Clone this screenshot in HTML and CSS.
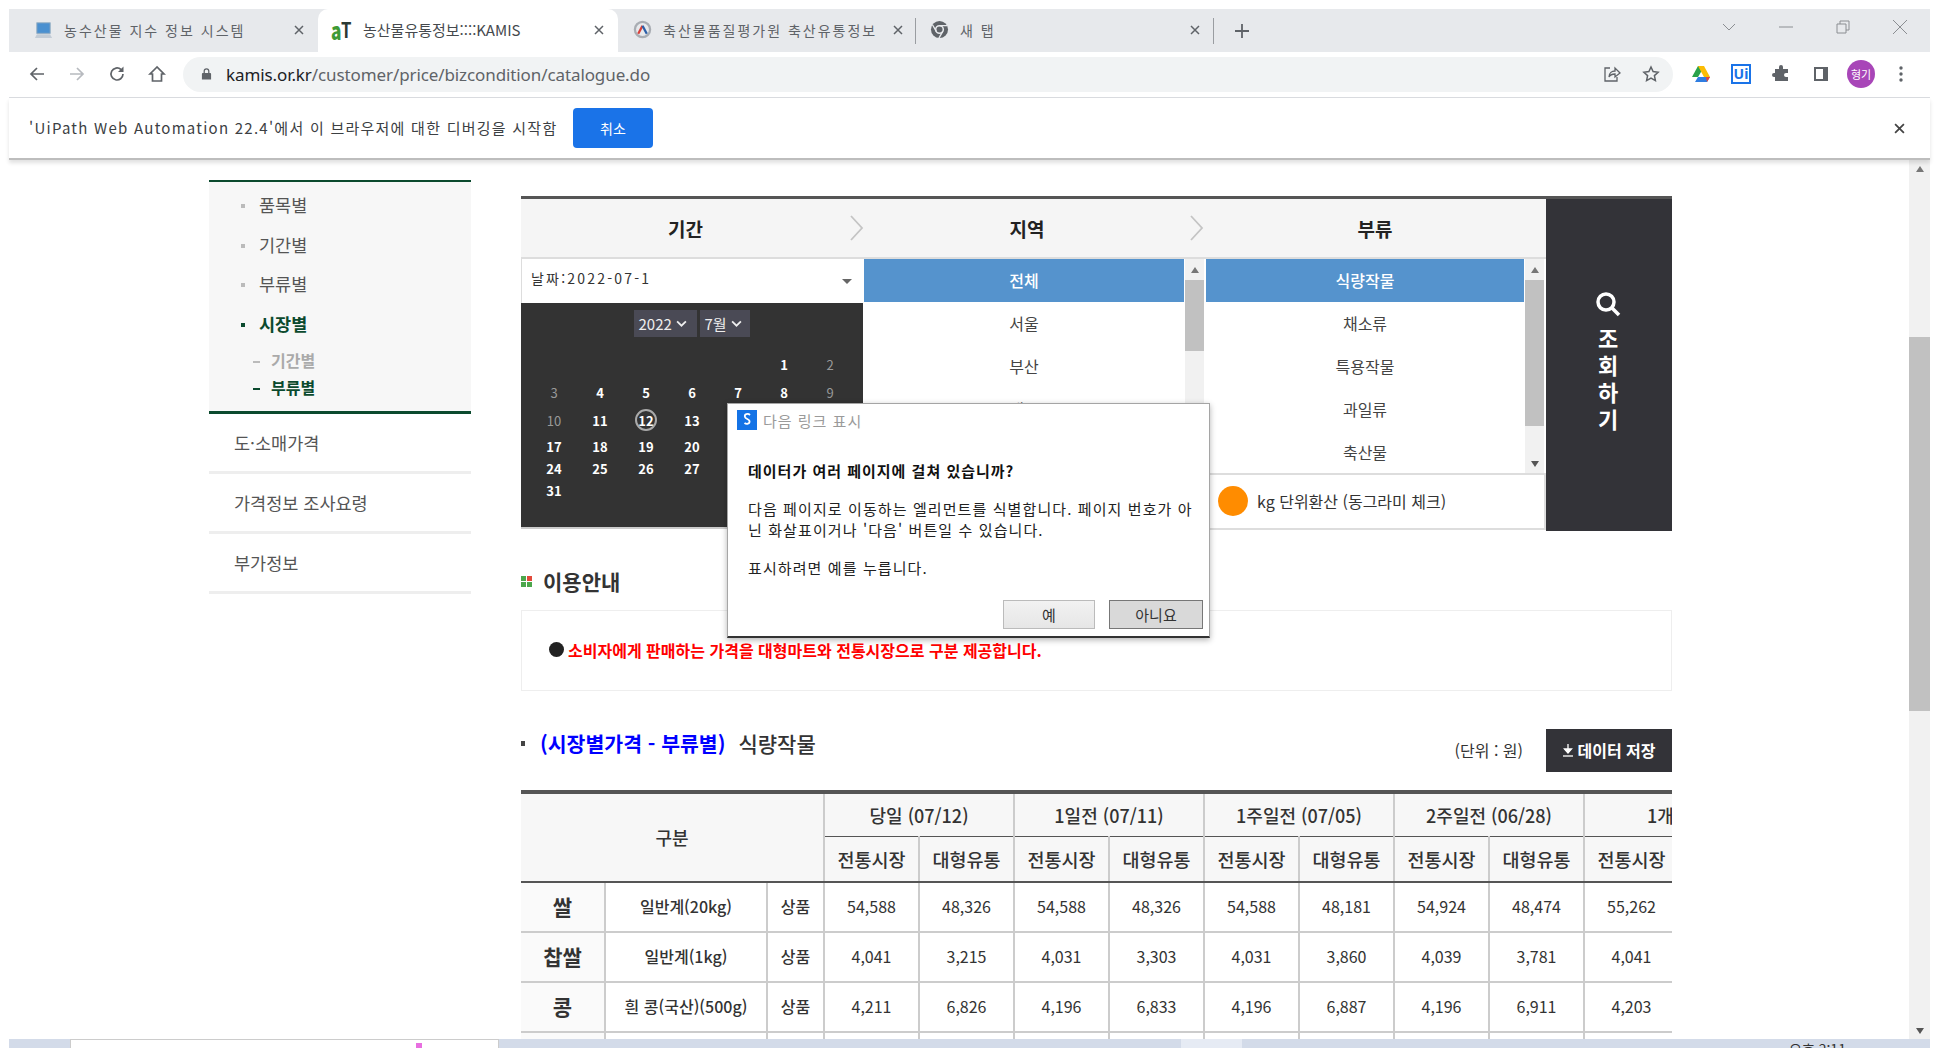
FILE: index.html
```html
<!DOCTYPE html>
<html lang="ko"><head>
<title>농산물유통정보::::KAMIS</title>
<meta charset="UTF-8">
<link rel="stylesheet" href="styles.css">
</head><body>
<div class="window">

<!-- browser chrome -->
<div class="tabstrip">
  <div class="tab tab1">
    <svg class="fav" viewBox="0 0 20 20"><rect x="3" y="3" width="14" height="11" fill="#4a90d0" stroke="#8aa7c0"/><path d="M1 19l2-4h14l2 4z" fill="#c3ccd6"/></svg>
    <span class="tab-title wide">농수산물 지수 정보 시스템</span>
    <svg class="tab-x" viewBox="0 0 10 10"><path d="M1 1l8 8M9 1l-8 8"/></svg>
  </div>
  <div class="tab tab-on">
    <span class="fav fav-at"><b>a</b><i>T</i></span>
    <span class="tab-title">농산물유통정보::::KAMIS</span>
    <svg class="tab-x" viewBox="0 0 10 10"><path d="M1 1l8 8M9 1l-8 8"/></svg>
  </div>
  <div class="tab tab3 tab-sep">
    <svg class="fav" viewBox="0 0 20 20"><circle cx="10" cy="10" r="8" fill="none" stroke="#a9adb3" stroke-width="2.4"/><path d="M5.500 14.500L10 6" stroke="#d8403a" stroke-width="2.400" fill="none"/><path d="M10 6l4.500 8.500" stroke="#2b5fa8" stroke-width="2.400" fill="none"/></svg>
    <span class="tab-title wide">축산물품질평가원 축산유통정보</span>
    <svg class="tab-x" viewBox="0 0 10 10"><path d="M1 1l8 8M9 1l-8 8"/></svg>
  </div>
  <div class="tab tab4 tab-sep">
    <svg class="fav" viewBox="0 0 20 20"><circle cx="10" cy="10" r="9" fill="#5f6368"/><circle cx="10" cy="10" r="4" fill="#5f6368" stroke="#e7e9ec" stroke-width="1.6"/><path d="M10 6h8M6.6 12L2.6 5M13.4 12l-4 7" stroke="#e7e9ec" stroke-width="1.4" fill="none"/></svg>
    <span class="tab-title wide">새 탭</span>
    <svg class="tab-x" viewBox="0 0 10 10"><path d="M1 1l8 8M9 1l-8 8"/></svg>
  </div>
  <svg class="new-tab" viewBox="0 0 16 16"><path d="M8 1v14M1 8h14"/></svg>
  <div class="win-btns">
    <svg viewBox="0 0 14 14"><path d="M1 4l6 6 6-6"/></svg>
    <svg viewBox="0 0 14 14"><path d="M0 7h14"/></svg>
    <svg viewBox="0 0 14 14"><path d="M1 4h9v9H1zM4 4V1h9v9h-3"/></svg>
    <svg viewBox="0 0 14 14"><path d="M0 0l14 14M14 0L0 14"/></svg>
  </div>
</div>

<div class="toolbar">
  <svg class="nav" viewBox="0 0 18 18"><path d="M16 9H3M9 3L3 9l6 6"/></svg>
  <svg class="nav nav-off" viewBox="0 0 18 18"><path d="M2 9h13M9 3l6 6-6 6"/></svg>
  <svg class="nav" viewBox="0 0 18 18"><path d="M15 9a6 6 0 1 1-2-4.500"/><path class="solid" d="M15.500 1.500v5.500h-5.500z"/></svg>
  <svg class="nav" viewBox="0 0 18 18"><path d="M9 2L2 9h2.500v7h9V9H16z"/></svg>
  <div class="omnibox">
    <svg class="lock" viewBox="0 0 12 14"><path d="M2 6h8a1 1 0 0 1 1 1v6H1V7a1 1 0 0 1 1-1z"/><path class="shackle" d="M3.500 6V4a2.500 2.500 0 0 1 5 0v2"/></svg>
    <span class="url"><span class="host">kamis.or.kr</span>/customer/price/bizcondition/catalogue.do</span>
    <svg class="omni-ic share" viewBox="0 0 18 18"><path d="M7 3H2v13h12v-4"/><path d="M6 12c0-4 3-6 6-6V3l5 5-5 4V9c-3 0-5 1-6 3z"/></svg>
    <svg class="omni-ic star" viewBox="0 0 18 18"><path d="M9 2l2.100 4.600 5 .6-3.700 3.400 1 5L9 13.100 4.600 15.600l1-5L1.900 7.200l5-.6z"/></svg>
  </div>
  <div class="ext">
    <svg viewBox="0 0 20 18"><path d="M7 1h6l-3 6-3 5H1z" fill="#2aa24b"/><path d="M7 1h6l6 11h-6z" fill="#fbbc04"/><path d="M4 17l3-5h12l-3 5z" fill="#2f7de1"/><path d="M16 17l3-5h-4z" fill="#e94235"/></svg>
    <span class="ext-ui">Ui</span>
    <svg viewBox="0 0 18 18"><path fill="#5f6368" d="M7 2a2 2 0 0 1 4 0v2h5v4h-2a2 2 0 0 0 0 4h2v4H3v-4H2a2 2 0 0 1 0-4h1V4h4z"/></svg>
    <svg viewBox="0 0 18 18"><path fill="#5f6368" d="M2 2h14v14H2zM4 4v10h7V4z"/></svg>
    <span class="avatar">형기</span>
    <svg viewBox="0 0 18 18"><circle cx="9" cy="3" r="1.700" fill="#5f6368"/><circle cx="9" cy="9" r="1.700" fill="#5f6368"/><circle cx="9" cy="15" r="1.700" fill="#5f6368"/></svg>
  </div>
</div>

<div class="infobar">
  <span class="info-text">'UiPath Web Automation 22.4'에서 이 브라우저에 대한 디버깅을 시작함</span>
  <span class="info-btn">취소</span>
  <svg class="info-x" viewBox="0 0 10 10"><path d="M1 1l8 8M9 1l-8 8"/></svg>
</div>

<!-- page -->
<div class="viewport">
<div class="page">

  <div class="side">
    <ul class="side-sub">
      <li>품목별</li>
      <li>기간별</li>
      <li>부류별</li>
      <li class="on">시장별</li>
      <li class="sub2 off">기간별</li>
      <li class="sub2 on">부류별</li>
    </ul>
    <div class="side-item">도·소매가격</div>
    <div class="side-item">가격정보 조사요령</div>
    <div class="side-item">부가정보</div>
  </div>

  <div class="main">

    <div class="finder">
      <div class="filters">
        <div class="filter-heads">
          <div class="fh"><span>기간</span><svg viewBox="0 0 14 26"><path d="M1 1l11 12L1 25"/></svg></div>
          <div class="fh"><span>지역</span><svg viewBox="0 0 14 26"><path d="M1 1l11 12L1 25"/></svg></div>
          <div class="fh"><span>부류</span></div>
        </div>
        <div class="filter-body">
          <div class="date-col">
            <div class="date-sel"><span>날짜:2022-07-1</span><i class="caret"></i></div>
            <div class="cal">
              <div class="cal-sels">
                <span class="cal-sel sel-y">2022<svg viewBox="0 0 10 6"><path d="M1 1l4 4 4-4"/></svg></span>
                <span class="cal-sel sel-m">7월<svg viewBox="0 0 10 6"><path d="M1 1l4 4 4-4"/></svg></span>
              </div>
              <div class="cal-grid">
                <span></span><span></span><span></span><span></span><span></span><span>1</span><span class="dim">2</span>
                <span class="dim">3</span><span>4</span><span>5</span><span>6</span><span>7</span><span>8</span><span class="dim">9</span>
                <span class="dim">10</span><span>11</span><span class="today">12</span><span>13</span><span>14</span><span>15</span><span>16</span>
                <span>17</span><span>18</span><span>19</span><span>20</span><span>21</span><span>22</span><span>23</span>
                <span>24</span><span>25</span><span>26</span><span>27</span><span>28</span><span>29</span><span>30</span>
                <span>31</span>
              </div>
            </div>
          </div>
          <div class="list-col">
            <div class="lists">
              <div class="list list-a">
                <ul><li class="sel">전체</li><li>서울</li><li>부산</li><li>대구</li><li>인천</li></ul>
                <div class="sb"><i class="up"></i><b class="thumb-a"></b></div>
              </div>
              <div class="list list-b">
                <ul><li class="sel">식량작물</li><li>채소류</li><li>특용작물</li><li>과일류</li><li>축산물</li></ul>
                <div class="sb"><i class="up"></i><b class="thumb-b"></b><i class="down"></i></div>
              </div>
            </div>
            <div class="kg-row"><i class="kg-dot"></i><span>kg 단위환산 (동그라미 체크)</span></div>
          </div>
        </div>
      </div>
      <div class="search-btn">
        <svg viewBox="0 0 26 26"><circle cx="11" cy="11" r="8"/><path d="M17 17l7 7"/></svg>
        <span>조</span><span>회</span><span>하</span><span>기</span>
      </div>
    </div>

    <h3 class="guide-title"><i class="guide-ic"><b></b><b></b><b></b><b></b></i>이용안내</h3>
    <div class="notice"><i class="notice-dot"></i><span>소비자에게 판매하는 가격을 대형마트와 전통시장으로 구분 제공합니다.</span></div>

    <div class="result-head">
      <i class="sq"></i>
      <span class="result-blue">(시장별가격 - 부류별)</span>
      <span class="result-name">식량작물</span>
      <span class="unit">(단위 : 원)</span>
      <span class="save-btn"><svg viewBox="0 0 12 14"><path d="M6 1v7M2.500 6L6 10l3.500-4z"/><path d="M1 13h10"/></svg>데이터 저장</span>
    </div>

    <div class="table-wrap">
    <table class="prices">
      <colgroup>
        <col class="c1"><col class="c2"><col class="c3">
        <col class="cv"><col class="cv"><col class="cv"><col class="cv"><col class="cv"><col class="cv"><col class="cv"><col class="cv"><col class="cv"><col class="cv">
      </colgroup>
      <thead>
        <tr class="h1">
          <th colspan="3" rowspan="2">구분</th>
          <th colspan="2">당일 (07/12)</th>
          <th colspan="2">1일전 (07/11)</th>
          <th colspan="2">1주일전 (07/05)</th>
          <th colspan="2">2주일전 (06/28)</th>
          <th colspan="2" class="month">1개월전 (06/12)</th>
        </tr>
        <tr class="h2">
          <th>전통시장</th><th>대형유통</th><th>전통시장</th><th>대형유통</th><th>전통시장</th><th>대형유통</th><th>전통시장</th><th>대형유통</th><th>전통시장</th><th>대형유통</th>
        </tr>
      </thead>
      <tbody>
        <tr><th>쌀</th><td class="kind">일반계(20kg)</td><td class="grade">상품</td><td>54,588</td><td>48,326</td><td>54,588</td><td>48,326</td><td>54,588</td><td>48,181</td><td>54,924</td><td>48,474</td><td>55,262</td><td></td></tr>
        <tr><th>찹쌀</th><td class="kind">일반계(1kg)</td><td class="grade">상품</td><td>4,041</td><td>3,215</td><td>4,031</td><td>3,303</td><td>4,031</td><td>3,860</td><td>4,039</td><td>3,781</td><td>4,041</td><td></td></tr>
        <tr><th>콩</th><td class="kind">흰 콩(국산)(500g)</td><td class="grade">상품</td><td>4,211</td><td>6,826</td><td>4,196</td><td>6,833</td><td>4,196</td><td>6,887</td><td>4,196</td><td>6,911</td><td>4,203</td><td></td></tr>
        <tr><th></th><td></td><td></td><td></td><td></td><td></td><td></td><td></td><td></td><td></td><td></td><td></td><td></td></tr>
      </tbody>
    </table>
    </div>
  </div>

  <!-- UiPath prompt, sits over the page -->
  <div class="dialog">
    <div class="dlg-title"><svg viewBox="0 0 20 20"><rect width="20" height="20" fill="#1473e6"/><path d="M13 5c-2-2-6-1-5 2 .5 2 4 2 4.500 4 .5 3-3 3.500-5 2" fill="none" stroke="#fff" stroke-width="1.800"/></svg><span>다음 링크 표시</span></div>
    <p class="dlg-q">데이터가 여러 페이지에 걸쳐 있습니까?</p>
    <p class="dlg-p">다음 페이지로 이동하는 엘리먼트를 식별합니다. 페이지 번호가 아<br>닌 화살표이거나 '다음' 버튼일 수 있습니다.</p>
    <p class="dlg-p dlg-last">표시하려면 예를 누릅니다.</p>
    <div class="dlg-btns"><span class="dlg-btn">예</span><span class="dlg-btn dlg-def">아니요</span></div>
  </div>

</div>
<div class="vscroll"><i class="up"></i><b></b><i class="down"></i></div>
</div>

<div class="taskbar">
  <div class="task-app"><i></i></div>
  <div class="task-lite"></div>
  <span class="task-clock">오후 2:11</span>
</div>

</div>
</body></html>
```

FILE: styles.css
```css
html, body { margin: 0; height: 100%; overflow: hidden; background: #fff; }
body {
  font-family: "Noto Sans CJK KR", "Noto Sans", sans-serif;
  color: #333;
}
ul { list-style: none; margin: 0; padding: 0; }
i { font-style: normal; }
svg { display: block; }

.window {
  height: 1048px;
  margin: 0 8px 0 9px;
  padding-top: 9px;
  box-sizing: border-box;
  display: flex;
  flex-direction: column;
}

/* tabs */
.tabstrip {
  height: 43px;
  flex: none;
  background: #e7e9ec;
  display: flex;
  align-items: center;
}
.tab {
  height: 43px;
  box-sizing: border-box;
  display: flex;
  align-items: center;
  color: #5f6368;
  font-size: 14px;
  padding-bottom: 2px;
  position: relative;
}
.tab1 { width: 309px; padding-left: 25px; }
.tab-on { width: 300px; padding-left: 13px; background: #fff; border-radius: 10px 10px 0 0; color: #45494d; }
.tab3 { width: 298px; padding-left: 15px; }
.tab4 { width: 298px; padding-left: 14px; }
.tab-sep::after { content: ""; position: absolute; right: 0; top: 9px; width: 1px; height: 26px; background: #9a9da1; }
.fav { width: 19px; height: 19px; flex: none; }
.fav-at { width: 20px; font-size: 24px; font-weight: 700; line-height: 19px; display: flex; }
.fav-at b { color: #3f9a34; transform: scaleX(.72); transform-origin: 0 50%; display: block; width: 10px; }
.fav-at i { color: #2b3a34; font-size: 21px; transform: scaleX(.8); transform-origin: 0 50%; display: block; }
.tab-title { flex: 1; margin-left: 12px; white-space: nowrap; }
.tab-on .tab-title { margin-left: 12px; font-size: 15px; }
.tab-title.wide { letter-spacing: 2px; margin-left: 11px; }
.tab-x { width: 10px; height: 10px; flex: none; margin-right: 14px; fill: none; stroke: #5f6368; stroke-width: 1.500; }
.tab3 .tab-x { margin-right: 13px; }
.new-tab { width: 16px; height: 16px; margin-left: 20px; fill: none; stroke: #5f6368; stroke-width: 1.800; }
.win-btns { margin-left: auto; display: flex; align-items: center; gap: 43px; margin-right: 23px; margin-top: -8px; }
.win-btns svg { width: 14px; height: 14px; fill: none; stroke: #8b8e92; stroke-width: 1; }

/* address bar */
.toolbar {
  height: 46px;
  flex: none;
  box-sizing: border-box;
  border-bottom: 1px solid #dadce0;
  display: flex;
  align-items: center;
  padding-left: 19px;
  padding-bottom: 1px;
}
.nav { width: 18px; height: 18px; margin-right: 22px; fill: none; stroke: #5f6368; stroke-width: 1.700; flex: none; }
.nav-off { stroke: #b7babf; }
.nav .solid { fill: #5f6368; stroke: none; }
.omnibox {
  margin-left: -5px;
  width: 1490px;
  height: 35px;
  flex: none;
  background: #f1f3f4;
  border-radius: 18px;
  display: flex;
  align-items: center;
  padding-left: 18px;
  box-sizing: border-box;
}
.lock { width: 11px; height: 14px; fill: #5f6368; flex: none; }
.lock .shackle { fill: none; stroke: #5f6368; stroke-width: 1.400; }
.url { margin-left: 14px; font-family: "Noto Sans", sans-serif; font-size: 17px; color: #5f6368; letter-spacing: -.1px; white-space: nowrap; }
.host { color: #202124; }
.omni-ic { width: 18px; height: 18px; fill: none; stroke: #5f6368; stroke-width: 1.300; flex: none; }
.share { margin-left: auto; }
.star { margin: 0 13px 0 21px; stroke-width: 1.500; }
.ext { display: flex; align-items: center; flex: 1; padding-left: 18px; gap: 20px; }
.ext svg { width: 20px; height: 18px; flex: none; }
.ext-ui { width: 20px; height: 20px; box-sizing: border-box; border: 2px solid #1a73e8; color: #1a73e8; font: 700 14px/16px "Noto Sans", sans-serif; text-align: center; flex: none; }
.avatar { width: 28px; height: 28px; border-radius: 50%; background: #a846b8; color: #fff; font-size: 11px; line-height: 28px; text-align: center; flex: none; margin: 0 -4px; }

/* debugging infobar */
.infobar {
  height: 62px;
  flex: none;
  box-sizing: border-box;
  border-bottom: 2px solid #bdbdbd;
  box-shadow: 0 3px 4px rgba(0,0,0,.12);
  display: flex;
  align-items: center;
  padding-left: 20px;
  position: relative;
  z-index: 2;
}
.info-text { font-size: 15px; letter-spacing: 1.250px; color: #3c4043; white-space: nowrap; width: 544px; margin-top: -2px; }
.info-btn { width: 80px; height: 40px; background: #1a73e8; color: #fff; border-radius: 4px; font-size: 14px; line-height: 40px; text-align: center; }
.info-x { width: 11px; height: 11px; margin-left: auto; margin-right: 25px; fill: none; stroke: #444; stroke-width: 1.600; }

/* page */
.viewport { flex: 1; min-height: 0; display: flex; }
.page {
  flex: 1;
  min-width: 0;
  display: flex;
  position: relative;
  overflow: hidden;
  padding-left: 200px;
}
.vscroll { width: 21px; flex: none; background: #f1f1f1; display: flex; flex-direction: column; align-items: center; }
.vscroll b { width: 21px; height: 374px; background: #c1c1c1; margin-top: 165px; }
.vscroll .down { margin-top: auto; margin-bottom: 5px; }
.vscroll .up { margin-top: 6px; }
.up { width: 0; height: 0; border: 4px solid transparent; border-top: 0; border-bottom: 6px solid #777; }
.down { width: 0; height: 0; border: 4px solid transparent; border-bottom: 0; border-top: 6px solid #555; }

/* left menu */
.side { width: 262px; flex: none; margin-top: 20px; }
.side-sub {
  border-top: 2px solid #0b4a2e;
  border-bottom: 3px solid #0b4a2e;
  background: #f7f7f7;
  padding: 4px 0 2px 32px;
  box-sizing: border-box;
  height: 234px;
}
.side-sub li {
  height: 39.500px;
  line-height: 38px;
  font-size: 17.500px;
  color: #555;
  padding-left: 18px;
  position: relative;
}
.side-sub li::before { content: ""; position: absolute; left: 0; top: 18px; width: 4px; height: 4px; background: #bbb; }
.side-sub li.on { color: #0b4a2e; font-weight: 700; }
.side-sub li.on::before { background: #0b4a2e; }
.side-sub li.sub2 { height: 27px; line-height: 27px; font-size: 16px; padding-left: 30px; font-weight: 700; }
.side-sub li.sub2::before { left: 12px; top: 14px; width: 7px; height: 2px; }
.side-sub li.off { color: #aaa; }
.side-sub li.off::before { background: #bbb; }
.side-sub li.sub2:nth-child(5) { margin-top: 3px; }
.side-item {
  height: 60px;
  box-sizing: border-box;
  border-bottom: 3px solid #eee;
  padding-left: 25px;
  font-size: 17.500px;
  line-height: 58px;
  color: #555;
}

.main { width: 1151px; flex: none; margin: 36px 0 0 50px; }

/* search filters */
.finder { display: flex; height: 335px; border-top: 3px solid #555; box-sizing: border-box; }
.filters { width: 1025px; flex: none; }
.filter-heads {
  height: 60px;
  box-sizing: border-box;
  background: #f5f5f5;
  border-bottom: 2px solid #ddd;
  display: grid;
  grid-template-columns: 343px 340px 342px;
}
.fh { display: flex; align-items: center; }
.fh span { flex: 1; text-align: center; font-size: 19px; font-weight: 700; color: #222; }
.fh svg { width: 14px; height: 26px; fill: none; stroke: #c4c4c4; stroke-width: 1.800; }
.filter-body { display: flex; height: 272px; }
.date-col { width: 342px; flex: none; }
.date-sel {
  height: 44px;
  box-sizing: border-box;
  display: flex;
  align-items: center;
  justify-content: space-between;
  padding: 0 11px 6px 9px;
  font-size: 14px;
  letter-spacing: 2.200px;
  color: #333;
  border-left: 1px solid #ddd;
}
.caret { width: 0; height: 0; border: 5px solid transparent; border-top: 5px solid #666; border-bottom: 0; margin-top: 6px; }
.cal { height: 224px; background: #333; border-bottom: 2px solid #ccc; }
.cal-sels { display: flex; justify-content: center; gap: 3px; padding: 7px 0 0; height: 27px; margin-right: 1px; }
.cal-sel { background: #4a4a55; height: 27px; color: #eee; font-size: 15px; line-height: 27px; padding-left: 5px; display: flex; align-items: center; gap: 4px; box-sizing: border-box; }
.sel-y { width: 63px; }
.sel-m { width: 50px; }
.cal-sel svg { width: 11px; height: 7px; fill: none; stroke: #eee; stroke-width: 1.600; }
.cal-grid {
  margin: 13px 0 0 10px;
  display: grid;
  grid-template-columns: repeat(7, 46px);
  grid-template-rows: 28px 28px 28px 24px 21px 22px;
  color: #fff;
  font-size: 13px;
  font-weight: 700;
  text-align: center;
}
.cal-grid span { display: flex; align-items: center; justify-content: center; }
.cal-grid .dim { color: #999; font-weight: 400; }
.cal-grid .today::before { content: ""; position: absolute; width: 18px; height: 18px; border: 2px solid #aaa; border-radius: 50%; }

.list-col { flex: 1; min-width: 0; }
.lists { display: flex; height: 216px; border-bottom: 2px solid #ddd; box-sizing: border-box; }
.list { display: flex; overflow: hidden; }
.list-a { width: 343px; }
.list-b { width: 340px; }
.list ul { flex: 1; min-width: 0; }
.list li { height: 43px; line-height: 43px; text-align: center; font-size: 16px; color: #444; }
.list-a ul { margin-left: 1px; }
.list li.sel { background: #5593cd; color: #fff; font-weight: 500; }
.sb { width: 19px; margin-right: 2px; flex: none; background: #f1f1f1; display: flex; flex-direction: column; align-items: center; border-left: 1px solid #fff; }
.sb .up { margin-top: 8px; }
.sb b { width: 100%; background: #c1c1c1; margin-top: 7px; }
.thumb-a { height: 71px; }
.thumb-b { height: 146px; }
.sb .down { margin-top: auto; margin-bottom: 6px; }
.kg-row {
  height: 55px;
  box-sizing: border-box;
  border-bottom: 2px solid #ddd;
  border-right: 2px solid #ddd;
  display: flex;
  align-items: center;
  padding: 0 0 2px 355px;
  font-size: 16px;
  color: #333;
}
.kg-dot { width: 30px; height: 30px; border-radius: 50%; background: #ff8c00; margin-right: 9px; flex: none; }
.search-btn {
  flex: 1;
  background: #333338;
  color: #fff;
  display: flex;
  flex-direction: column;
  align-items: center;
  padding: 92px 2px 0 0;
  font-size: 22px;
  font-weight: 700;
  line-height: 27px;
}
.search-btn svg { width: 26px; height: 26px; fill: none; stroke: #fff; stroke-width: 3.500; margin-bottom: 7px; }

/* guide */
.guide-title { margin: 29px 0 9px; height: 42px; display: flex; align-items: center; font-size: 21px; font-weight: 700; color: #333; line-height: 30px; }
.guide-ic { width: 11px; height: 11px; margin-right: 11px; display: grid; grid-template-columns: 5px 5px; grid-template-rows: 5px 5px; gap: 1px; }
.guide-ic b { background: #4ca64c; }
.guide-ic b:nth-child(2) { background: #e24a3b; }
.notice {
  height: 81px;
  box-sizing: border-box;
  margin-top: -1px;
  border: 1px solid #eee;
  display: flex;
  align-items: center;
  padding: 0 0 2px 27px;
  color: #f00;
  font-size: 16px;
  font-weight: 700;
}
.notice-dot { width: 15px; height: 15px; background: #222; border-radius: 50%; margin-right: 4px; flex: none; }

/* result heading */
.result-head { margin-top: 38px; height: 43px; display: flex; align-items: center; }
.sq { width: 4px; height: 5px; background: #444; margin-right: 15px; margin-top: -14px; flex: none; }
.result-blue { color: #00f; font-size: 20.500px; font-weight: 700; margin-top: -15px; }
.result-name { color: #333; font-size: 21px; font-weight: 500; margin: -15px 0 0 13px; }
.unit { margin-left: auto; font-size: 16px; color: #333; margin: 0 23px 2px auto; }
.save-btn { width: 126px; height: 43px; background: #333338; color: #fff; font-size: 16px; font-weight: 700; display: flex; align-items: center; justify-content: center; gap: 3px; padding-bottom: 2px; box-sizing: border-box; }
.save-btn svg { width: 12px; height: 14px; stroke: #fff; fill: #fff; stroke-width: 1.300; }

/* price table */
.table-wrap { margin-top: 18px; overflow: hidden; border-top: 4px solid #555; }
.prices { width: 1253px; table-layout: fixed; border-collapse: collapse; color: #333; }
.c1 { width: 84px; }
.c2 { width: 162px; }
.c3 { width: 57px; }
.cv { width: 95px; }
.prices th, .prices td { border: 2px solid #ccc; border-top: 0; text-align: center; padding: 0 0 2px; overflow: hidden; white-space: nowrap; }
.prices thead th { background: #f7f7f7; font-size: 18px; font-weight: 500; line-height: 24px; border-bottom: 0; padding: 0; }
.prices thead th[rowspan] { padding-bottom: 2px; }
.prices thead th.month { padding-left: 62px; }
.h1 th { height: 42px; border-bottom: 0; }
.h1 th:first-child { border-left: 0; border-bottom: 2px solid #555 !important; }
.h1 th:not(:first-child) { border-bottom: 1.500px solid #555 !important; }
.h2 th { height: 44px; font-size: 18.500px !important; border-bottom: 2px solid #555 !important; }
.prices tbody tr { height: 50px; }
.prices tbody th { border-left: 0; background: #fafafa; font-size: 21px; font-weight: 700; }
.prices td { font-size: 16px; }
.prices .kind { font-size: 16px; font-weight: 500; }
.prices .grade { font-size: 16px; font-weight: 500; }

/* UiPath dialog */
.dialog {
  position: absolute;
  left: 718px;
  top: 243px;
  width: 483px;
  height: 235px;
  box-sizing: border-box;
  background: #fff;
  border: 1px solid #a5a5a5;
  border-bottom: 2px solid #333;
  box-shadow: 0 2px 6px rgba(0,0,0,.3);
  font-size: 14px;
  color: #222;
  display: flex;
  flex-direction: column;
  padding: 6px 6px 7px 9px;
}
.dlg-title { display: flex; align-items: center; height: 20px; color: #9a9a9a; letter-spacing: 1px; font-size: 15px; }
.dlg-title svg { width: 20px; height: 20px; margin-right: 6px; }
.dlg-q { margin: 30px 0 0 11px; font-weight: 700; letter-spacing: 1px; line-height: 22px; font-size: 15px; color: #111; }
.dlg-p { margin: 17px 0 0 11px; line-height: 20.500px; font-size: 15px; letter-spacing: 1.100px; color: #222; white-space: nowrap; }
.dlg-last { margin-top: 18px; }
.dlg-btns { margin-top: auto; display: flex; justify-content: flex-end; gap: 14px; }
.dlg-btn { width: 92px; height: 29px; box-sizing: border-box; border: 1px solid #bbb; background: linear-gradient(#f2f2f2, #e6e6e6); text-align: center; line-height: 27px; color: #333; font-size: 15px; }
.dlg-def { border: 1px solid #777; background: #d9d9d9; width: 94px; }

/* taskbar strip */
.taskbar {
  height: 9px;
  flex: none;
  background: #d3dbe9;
  display: flex;
  overflow: hidden;
}
.task-app { width: 429px; margin-left: 61px; background: #fff; border: 1px solid #ccc; border-bottom: 0; box-sizing: border-box; padding: 3px 0 0 345px; }
.task-app i { display: block; width: 6px; height: 6px; background: #e86fe0; }
.task-lite { width: 61px; margin-left: 682px; background: #e6ebf4; }
.task-clock { margin-left: 547px; font-size: 14px; line-height: 20px; color: #333; white-space: nowrap; }
```
